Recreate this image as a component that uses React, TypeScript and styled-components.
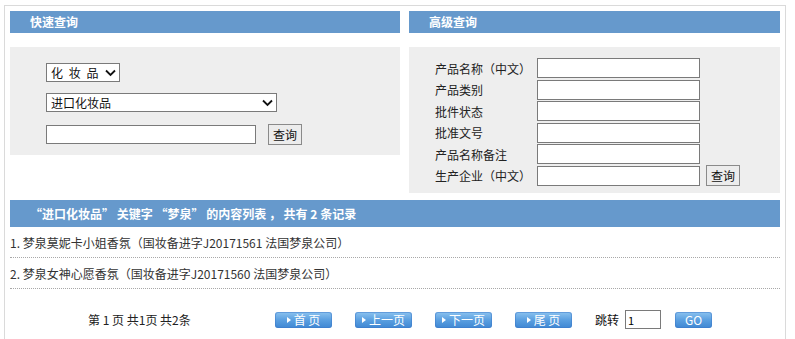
import React from 'react';
import styled, { createGlobalStyle } from 'styled-components';

const GlobalStyle = createGlobalStyle`
  body {
    margin: 0;
    background: #fff;
    font-family: "Noto Sans CJK SC", "Liberation Sans", sans-serif;
    font-size: 12px;
    color: #333;
  }
`

const results = [
  { name: '梦泉莫妮卡小姐香氛', code: 'J20171561', company: '法国梦泉公司' },
  { name: '梦泉女神心愿香氛', code: 'J20171560', company: '法国梦泉公司' },
];

const advancedFields = ['产品名称（中文）', '产品类别', '批件状态', '批准文号', '产品名称备注', '生产企业（中文）'];

const Chevron: React.FC = () => (
  <svg width="11" height="8" viewBox="0 0 11 8">
    <path d="M1 1.5 L5.5 6 L10 1.5" stroke="#111" strokeWidth="1.8" fill="none" />
  </svg>
);

const Dropdown: React.FC<{ value: string; width: number; spaced?: boolean }> = ({ value, width, spaced }) => (
  <SelectBox $width={width} $spaced={spaced}>
    <span>{value}</span>
    <ArrowSlot>
      <Chevron />
    </ArrowSlot>
  </SelectBox>
);

const PageButton: React.FC<{ label: string; width?: number; arrow?: boolean }> = ({ label, width = 57, arrow = true }) => (
  <PageBtn $width={width}>
    {arrow && <Tri />}
    <span>{label}</span>
  </PageBtn>
);

const App: React.FC = () => {
  return (
    <>
      <GlobalStyle />
      <Frame>
        <TopRow>
          <Column $width={390}>
            <SectionHeader>快速查询</SectionHeader>
            <QuickPanel>
              <Dropdown value="化 妆 品" width={74} spaced />
              <Dropdown value="进口化妆品" width={231} />
              <InlineRow>
                <TextInput $width={210} />
                <QueryButton>查询</QueryButton>
              </InlineRow>
            </QuickPanel>
          </Column>
          <Column $width={371}>
            <SectionHeader>高级查询</SectionHeader>
            <AdvancedPanel>
              {advancedFields.map((f, i) => (
                <React.Fragment key={f}>
                  <FieldLabel>{f}</FieldLabel>
                  <TextInput $width={163} $height={20} />
                  <div>{i === advancedFields.length - 1 && <QueryButton>查询</QueryButton>}</div>
                </React.Fragment>
              ))}
            </AdvancedPanel>
          </Column>
        </TopRow>

        <ResultHeader>“进口化妆品” 关键字 “梦泉” 的内容列表 ， 共有 2 条记录</ResultHeader>
        {results.map((r, i) => (
          <ResultRow key={r.code}>
            {i + 1}. {r.name}（国妆备进字{r.code} {r.company}）
          </ResultRow>
        ))}

        <Pager>
          <PageInfo>第 1 页 共1页 共2条</PageInfo>
          <PageButton label="首 页" />
          <PageButton label="上一页" />
          <PageButton label="下一页" />
          <PageButton label="尾 页" />
          <JumpLabel>跳转</JumpLabel>
          <JumpInput defaultValue="1" />
          <PageButton label="GO" width={37} arrow={false} />
        </Pager>
      </Frame>
    </>
  );
}

export default App;

const Frame = styled.div`
  box-sizing: border-box;
  width: 782px;
  min-height: 340px;
  margin: 5px 0 0 4px;
  padding: 5px 5px 0 5px;
  border: 1px solid #dadada;
  border-bottom: none;
`

const TopRow = styled.div`
  display: flex;
  align-items: flex-start;
  gap: 9px;
`

const Column = styled.div<{ $width: number }>`
  width: ${p => p.$width}px;
`

const SectionHeader = styled.div`
  height: 22px;
  line-height: 22px;
  padding-left: 20px;
  background: #6699cc;
  color: #fff;
  font-weight: bold;
  font-size: 12px;
`

const QuickPanel = styled.div`
  box-sizing: border-box;
  height: 108px;
  margin-top: 14px;
  padding: 16px 0 0 36px;
  background: #eeeeee;
  display: flex;
  flex-direction: column;
  align-items: flex-start;
  gap: 11px;
`

const SelectBox = styled.div<{ $width: number; $spaced?: boolean }>`
  box-sizing: border-box;
  width: ${p => p.$width}px;
  height: 19px;
  display: flex;
  align-items: center;
  justify-content: space-between;
  padding: 0 3px 0 4px;
  background: #fff;
  border: 1px solid #7a7a7a;
  color: #111;
  font-size: 12px;
  white-space: pre;
  letter-spacing: ${p => (p.$spaced ? '1.5px' : '0')};
`

const ArrowSlot = styled.span`
  display: flex;
  align-items: center;
`

const InlineRow = styled.div`
  display: flex;
  align-items: center;
  gap: 12px;
  margin-top: 1px;
`

const TextInput = styled.input<{ $width: number; $height?: number }>`
  box-sizing: border-box;
  width: ${p => p.$width}px;
  height: ${p => p.$height ?? 19}px;
  margin: 0;
  padding: 0 3px;
  background: #fff;
  border: 1px solid #7a7a7a;
  font-family: inherit;
  font-size: 12px;
`

const QueryButton = styled.button`
  box-sizing: border-box;
  width: 34px;
  height: 21px;
  margin: 0;
  padding: 0;
  background: #ececec;
  border: 1px solid #8a8a8a;
  color: #111;
  font-family: inherit;
  font-size: 12px;
  line-height: 19px;
`

const AdvancedPanel = styled.div`
  box-sizing: border-box;
  height: 146px;
  margin-top: 14px;
  padding: 11px 0 0 26px;
  background: #eeeeee;
  display: grid;
  grid-template-columns: 102px 163px auto;
  grid-auto-rows: 20px;
  row-gap: 1.6px;
  column-gap: 0;
  align-items: center;

  & > div {
    padding-left: 6px;
    display: flex;
    align-items: center;
  }
`

const FieldLabel = styled.span`
  color: #222;
  font-size: 12px;
`

const ResultHeader = styled.div`
  height: 27px;
  line-height: 27px;
  margin-top: 7px;
  padding-left: 20px;
  background: #6699cc;
  color: #fff;
  font-weight: bold;
  font-size: 12px;
`

const ResultRow = styled.div`
  height: 30px;
  line-height: 31px;
  border-bottom: 1px dotted #a8a8a8;
  color: #333;
  font-size: 12px;
`

const Pager = styled.div`
  display: flex;
  align-items: center;
  height: 19px;
  padding: 21px 0 0 78px;
  color: #222;
  font-size: 12px;
`

const PageInfo = styled.span`
  width: 187px;
  white-space: pre;
`

const PageBtn = styled.div<{ $width: number }>`
  box-sizing: border-box;
  width: ${p => p.$width}px;
  height: 16px;
  margin-right: 23px;
  display: flex;
  align-items: center;
  justify-content: center;
  gap: 2px;
  border-radius: 3px;
  background: linear-gradient(to bottom, #8cc3ef 0%, #5a9fe0 50%, #3f87d3 100%);
  box-shadow: inset 0 0 0 1px rgba(60, 120, 200, 0.5);
  color: #fff;
  font-size: 12px;
  line-height: 16px;
  white-space: pre;
`

const Tri = styled.span`
  width: 0;
  height: 0;
  border-top: 3px solid transparent;
  border-bottom: 3px solid transparent;
  border-left: 4px solid #fff;
  margin-right: 1px;
`

const JumpLabel = styled.span`
  color: #111;
  margin-right: 6px;
`

const JumpInput = styled.input`
  box-sizing: border-box;
  width: 36px;
  height: 19px;
  margin: 0 14px 0 0;
  padding: 0 2px;
  border: 1px solid #7a7a7a;
  font-family: inherit;
  font-size: 11px;
`
